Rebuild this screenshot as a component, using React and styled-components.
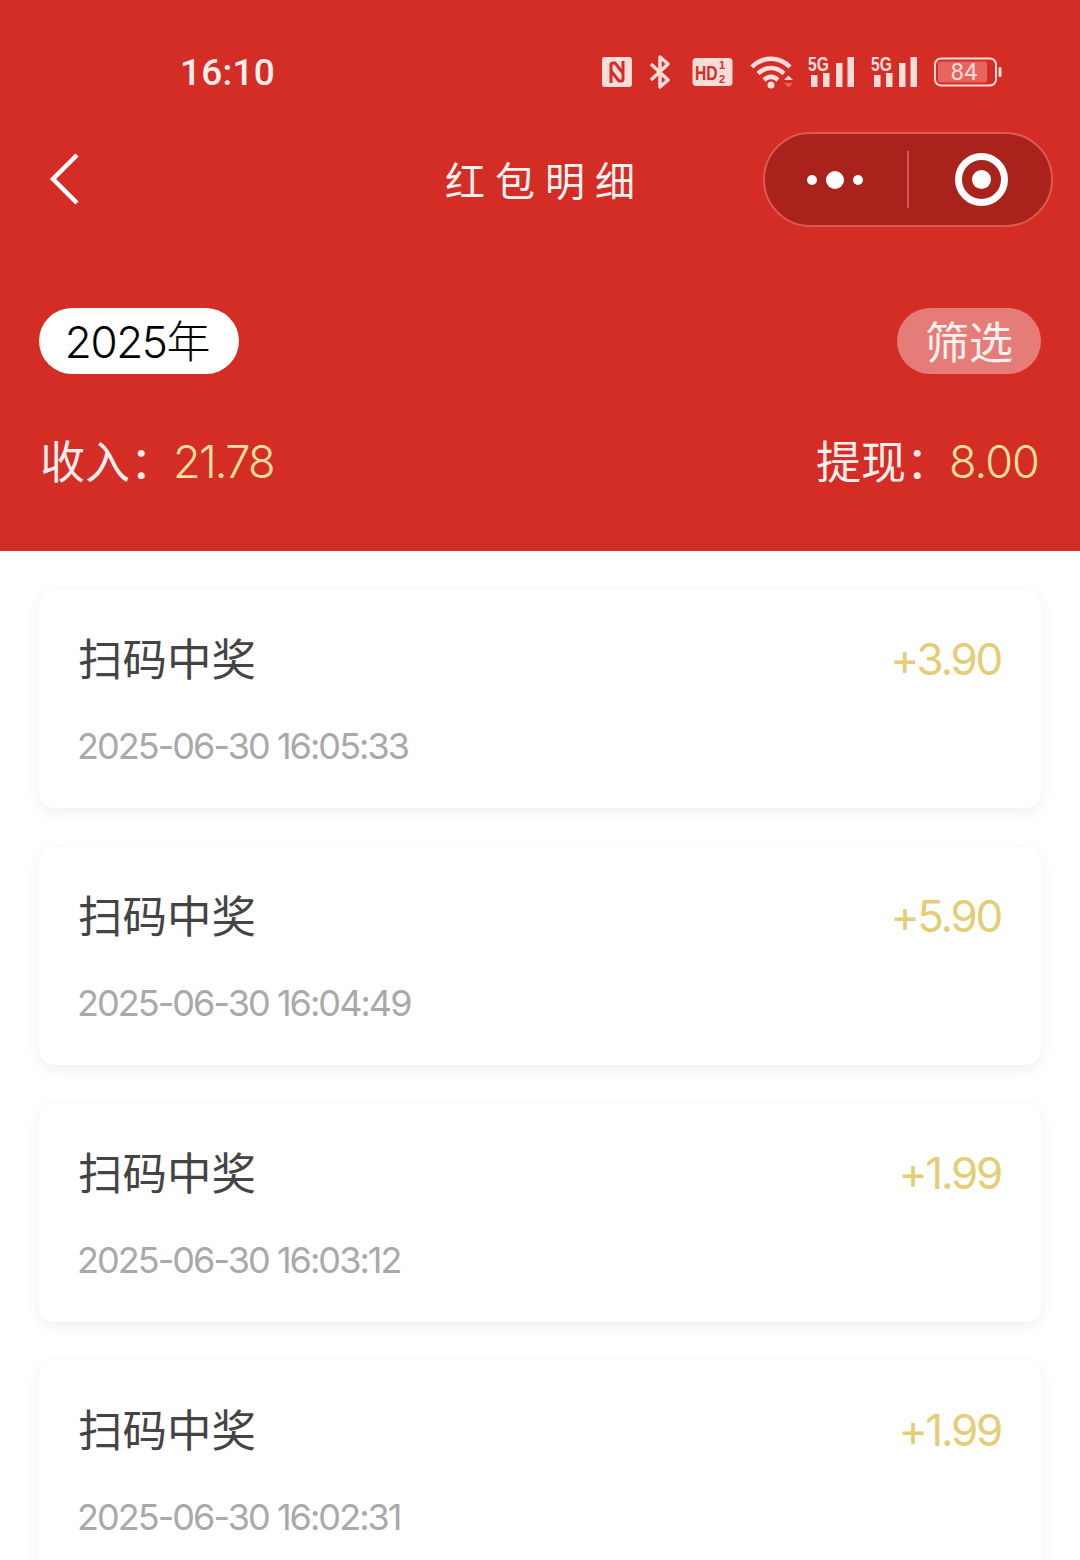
import React from "react";
import styled, { createGlobalStyle } from "styled-components";

const Global = createGlobalStyle`
  html, body { margin: 0; padding: 0; background: #fff; }
  body { font-family: "Inter", "Noto Sans CJK SC", sans-serif; }
`;
const Page = styled.div`
  width: 1080px; height: 1560px; overflow: hidden; background: #fff;
`;
const Header = styled.header`
  background: #d32d26; height: 551px; display: flex; flex-direction: column; box-sizing: border-box;
`;
const StatusBar = styled.div`
  height: 132px; flex: none; display: flex; justify-content: space-between; align-items: flex-start;
  padding: 52px 78px 0 181px; box-sizing: border-box;
`;
const Clock = styled.div`
  font: 500 37px/42px "Roboto", sans-serif; color: #fdeeec; letter-spacing: .2px; margin-left: -1px;
`;
const StatusIcons = styled.div`
  display: flex; align-items: center; height: 40px; color: #fcdcd8;
`;
const Nav = styled.div`
  height: 95px; flex: none; display: flex; align-items: center; justify-content: space-between;
  padding: 0 27px 0 49px; position: relative;
`;
const BackIcon = styled.svg`
  width: 34px; height: 54px; display: block; margin-top: -2px;
`;
const Title = styled.h1`
  position: absolute; left: 0; right: 0; top: 22px; margin: 0; text-align: center;
  font: 400 40px/50px "Noto Sans CJK SC", sans-serif; letter-spacing: 10px; color: #fdf2f0;
  padding-left: 10px;
`;
const Capsule = styled.div`
  width: 290px; height: 95px; flex: none; box-sizing: border-box; border: 2px solid #dc5a52; border-radius: 48px;
  background: #a9221b; display: flex; align-items: center;
`;
const MoreSide = styled.div`
  width: 142px; flex: none; box-sizing: border-box; padding-right: 3px;
  display: flex; align-items: center; justify-content: center;
`;
const CloseSide = styled.div`
  flex: 1; box-sizing: border-box; padding-left: 3px;
  display: flex; align-items: center; justify-content: center;
`;
const CapsuleLine = styled.div`
  width: 2px; height: 57px; background: #cf5b53; flex: none;
`;
const Dots = styled.div`
  display: flex; align-items: center; gap: 9px;
`;
const Dot = styled.span`
  display: block; border-radius: 50%; background: #fff;
  width: ${p => p.$size}px; height: ${p => p.$size}px;
`;
const Target = styled.div`
  width: 53px; height: 53px; box-sizing: border-box; border: 7px solid #fff; border-radius: 50%;
  display: flex; align-items: center; justify-content: center;
  &::after { content: ""; width: 19px; height: 19px; background: #fff; border-radius: 50%; }
`;
const FilterRow = styled.div`
  display: flex; justify-content: space-between; align-items: center; padding: 81px 39px 0;
`;
const YearPill = styled.div`
  width: 200px; height: 66px; border-radius: 33px; box-sizing: border-box; padding: 2px 4px 0 0;
  display: flex; align-items: center; justify-content: center;
  font: 300 44px/66px "Inter", "Noto Sans CJK SC", sans-serif; letter-spacing: -1.4px;
  background: #fff; color: #000;
`;
const FilterPill = styled.div`
  width: 144px; height: 66px; border-radius: 33px; box-sizing: border-box; padding-bottom: 3px;
  display: flex; align-items: center; justify-content: center;
  font: 400 44px/60px "Noto Sans CJK SC", sans-serif;
  background: #e57c78; color: #fdf0ee;
`;
const Summary = styled.div`
  display: flex; justify-content: space-between; align-items: center; padding: 56px 41px 0 40px;
  color: #fbeeec;
`;
const SummaryItem = styled.div`
  display: flex; align-items: center;
`;
const Label = styled.span`
  font: 400 45px/60px "Noto Sans CJK SC", sans-serif; margin-bottom: 4px;
`;
const Amount = styled.span`
  font: 300 45px/60px "Inter", sans-serif;
  color: #f8e09a; margin-left: -2px; letter-spacing: ${p => p.$track}px;
`;
const List = styled.main`
  padding: 39px 39px 0; display: flex; flex-direction: column; gap: 39px;
`;
const Card = styled.article`
  height: 218px; flex: none; box-sizing: border-box; border-radius: 16px; background: #fff;
  box-shadow: 0 4px 16px rgba(0,0,0,.07);
  padding: 37px 40px 0 39px;
`;
const Top = styled.div`
  display: flex; justify-content: space-between; align-items: center; height: 60px;
`;
const Name = styled.div`
  font: 400 44.5px/60px "Noto Sans CJK SC", sans-serif; color: #444;
`;
const Money = styled.div`
  font: 400 44px/60px "Inter", sans-serif; color: #e4cd76; letter-spacing: -2.3px; padding-top: 3px;
`;
const Time = styled.div`
  margin-top: 37px; margin-left: -1px; font: 400 36px/44px "Inter", sans-serif; color: #a9a9a9; letter-spacing: -1.95px;
`;

const IconNfc = () => (
  <svg width="32" height="32" viewBox="0 0 32 32">
    <rect x="1" y="1" width="30" height="30" rx="3" fill="currentColor" />
    <path d="M10 27V9a2 2 0 0 1 2-2h2l8 10" fill="none" stroke="#d32d26" strokeWidth="3" />
    <path d="M22 5v18a2 2 0 0 1-2 2h-2l-8-10" fill="none" stroke="#d32d26" strokeWidth="3" />
  </svg>
);
const IconBt = () => (
  <svg width="24" height="34" viewBox="0 0 24 34" style={{ marginLeft: 15 }}>
    <path d="M3 9l17 16-8 7V2l8 7L3 25" fill="none" stroke="currentColor" strokeWidth="3.500" strokeLinejoin="round" />
  </svg>
);
const IconHd = () => (
  <svg width="42" height="30" viewBox="0 0 42 30" style={{ marginLeft: 20 }}>
    <rect x="0.5" y="1" width="40" height="28" rx="4" fill="currentColor" />
    <text transform="translate(3 23) scale(.78 1)" fontFamily="Liberation Sans" fontWeight="700" fontSize="20" fill="#d32d26">HD</text>
    <text x="27" y="12" fontFamily="Liberation Sans" fontWeight="700" fontSize="11" fill="#d32d26">1</text>
    <text x="27" y="26" fontFamily="Liberation Sans" fontWeight="700" fontSize="11" fill="#d32d26">2</text>
  </svg>
);
const IconWifi = () => (
  <svg width="46" height="34" viewBox="0 0 46 34" style={{ marginLeft: 16 }}>
    <path d="M2 12C13 1 29 1 40 12M8 18.5C16 11 26 11 34 18.5M14 25C18.500 21 23.500 21 28 25" fill="none" stroke="currentColor" strokeWidth="4.500" />
    <circle cx="21" cy="30" r="3.500" fill="currentColor" />
    <path d="M34 25l4.500-4.500 4.500 4.500z" fill="currentColor" />
    <path d="M34 28l4.500 4.500 4.500-4.500z" fill="#e8645c" />
  </svg>
);
const IconSignal = ({ ml }) => (
  <svg width="47" height="38" viewBox="0 -4 47 38" style={{ marginLeft: ml, marginBottom: 4 }}>
    <text transform="translate(0 16) scale(.78 1)" fontFamily="Liberation Sans" fontWeight="700" fontSize="20" fill="currentColor">5G</text>
    <rect x="3" y="20" width="6.500" height="12" fill="currentColor" />
    <rect x="15" y="18" width="6.500" height="14" fill="currentColor" />
    <rect x="28" y="8" width="6.500" height="24" fill="currentColor" />
    <rect x="39.500" y="2" width="6.500" height="30" fill="currentColor" />
  </svg>
);
const IconBattery = () => (
  <svg width="68" height="30" viewBox="0 0 68 30" style={{ marginLeft: 16 }}>
    <rect x="1" y="1.500" width="61" height="27" rx="6" fill="none" stroke="currentColor" strokeWidth="2" />
    <rect x="4" y="4.500" width="49" height="21" rx="2.500" fill="#e8645c" />
    <rect x="64.500" y="10" width="3" height="10" rx="1.500" fill="currentColor" />
    <text x="30" y="23" textAnchor="middle" fontFamily="Roboto" fontSize="24" fill="currentColor">84</text>
  </svg>
);

const rows = [
  { amount: "+3.90", time: "2025-06-30 16:05:33" },
  { amount: "+5.90", time: "2025-06-30 16:04:49" },
  { amount: "+1.99", time: "2025-06-30 16:03:12" },
  { amount: "+1.99", time: "2025-06-30 16:02:31" },
];

export default function App() {
  return (
    <Page>
      <Global />
      <Header>
        <StatusBar>
          <Clock>16:10</Clock>
          <StatusIcons>
            <IconNfc /><IconBt /><IconHd /><IconWifi />
            <IconSignal ml={12} /><IconSignal ml={16} /><IconBattery />
          </StatusIcons>
        </StatusBar>
        <Nav>
          <BackIcon viewBox="0 0 34 54">
            <path d="M28 3L4 27l24 24" fill="none" stroke="#fff" strokeWidth="4.500" />
          </BackIcon>
          <Title>红包明细</Title>
          <Capsule>
            <MoreSide>
              <Dots><Dot $size={10} /><Dot $size={18} /><Dot $size={10} /></Dots>
            </MoreSide>
            <CapsuleLine />
            <CloseSide><Target /></CloseSide>
          </Capsule>
        </Nav>
        <FilterRow>
          <YearPill>2025年</YearPill>
          <FilterPill>筛选</FilterPill>
        </FilterRow>
        <Summary>
          <SummaryItem><Label>收入：</Label><Amount $track={-1.75}>21.78</Amount></SummaryItem>
          <SummaryItem><Label>提现：</Label><Amount $track={-0.9}>8.00</Amount></SummaryItem>
        </Summary>
      </Header>
      <List>
        {rows.map((r, i) => (
          <Card key={i}>
            <Top><Name>扫码中奖</Name><Money>{r.amount}</Money></Top>
            <Time>{r.time}</Time>
          </Card>
        ))}
      </List>
    </Page>
  );
}
